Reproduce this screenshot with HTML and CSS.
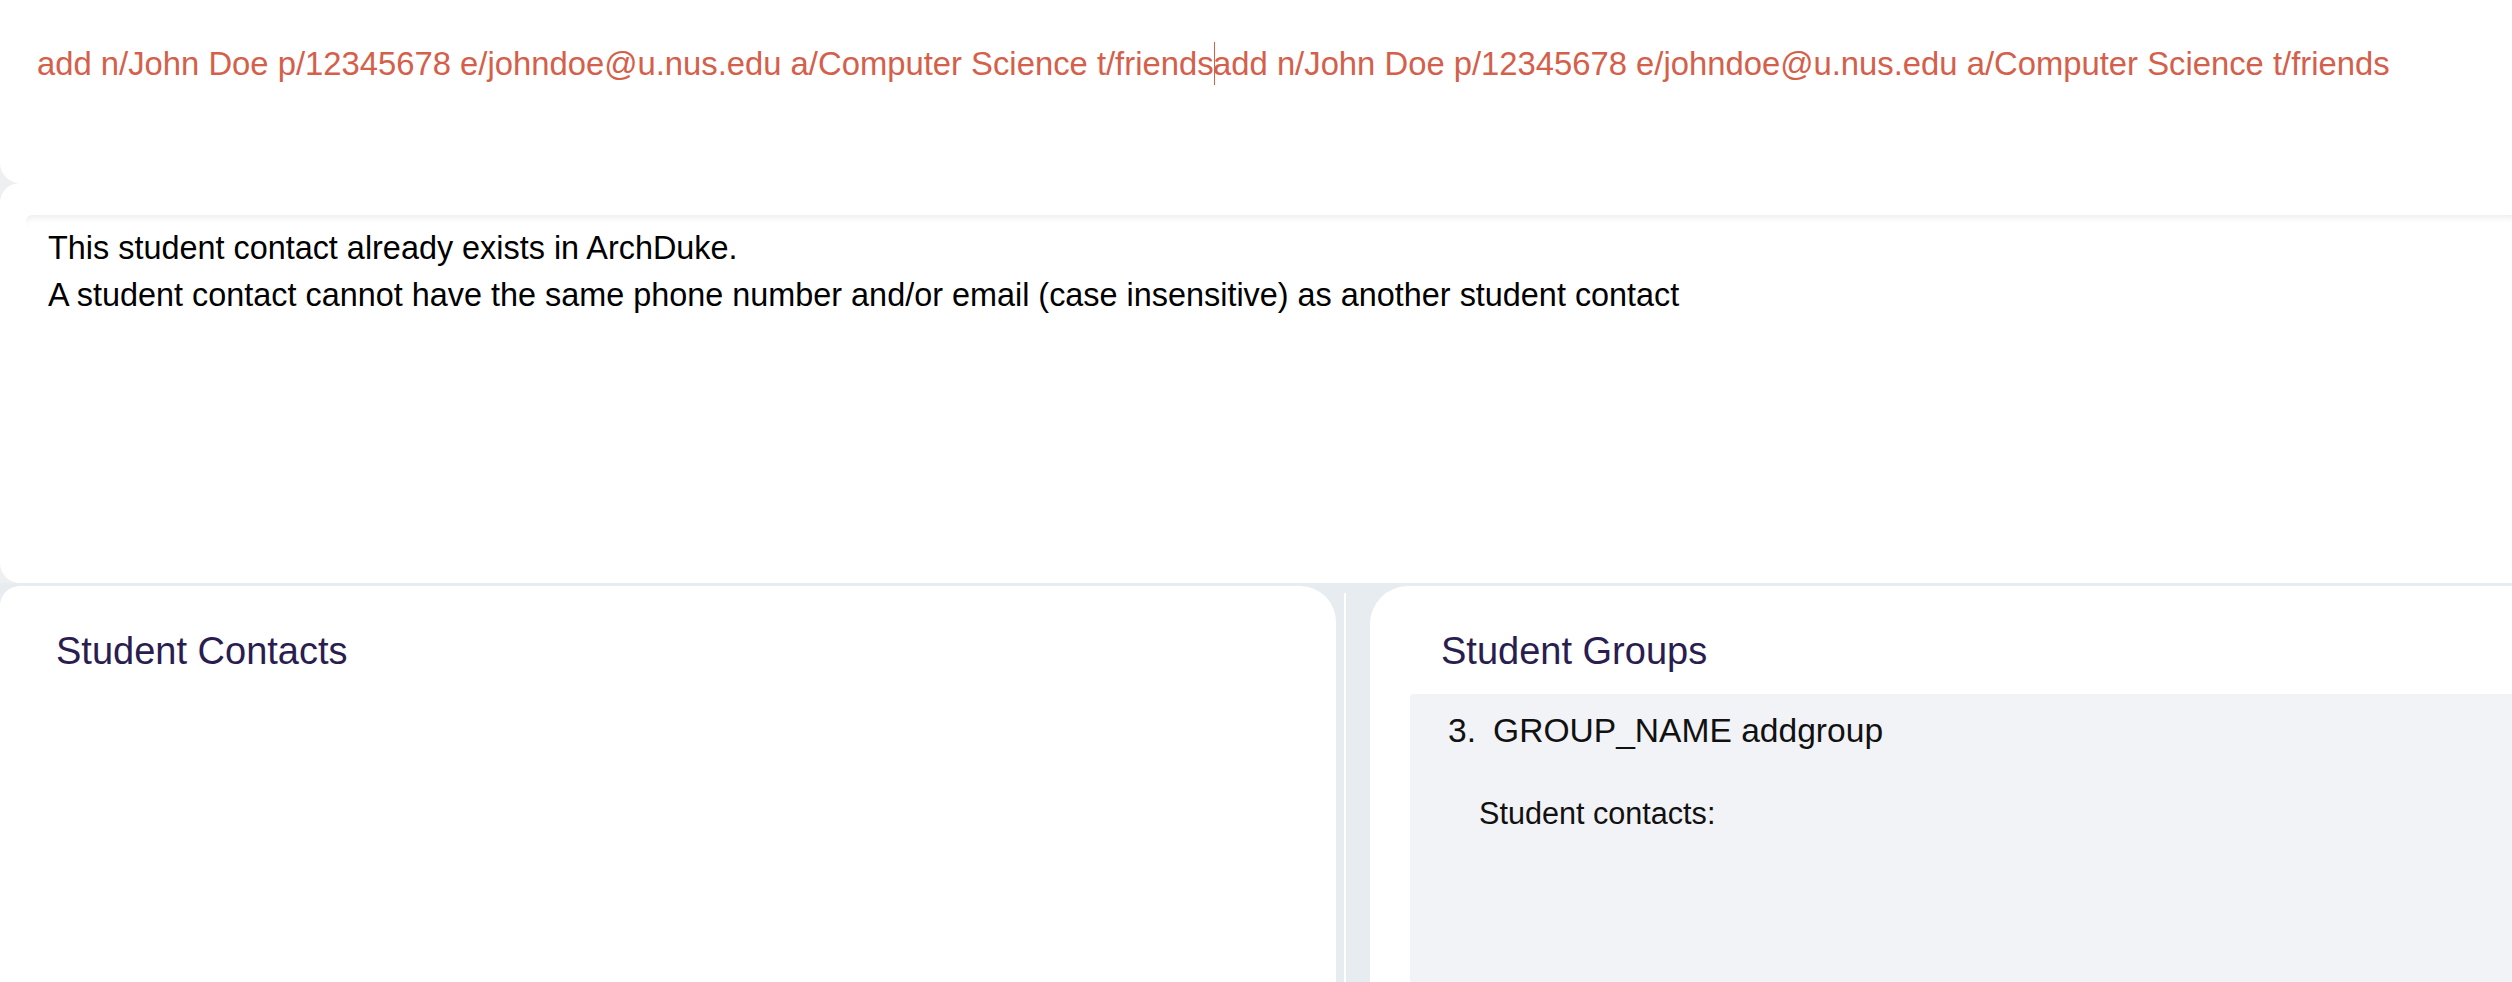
FILE: index.html
```html
<!DOCTYPE html>
<html lang="en">
<head>
<meta charset="utf-8">
<title>ArchDuke</title>
<link rel="stylesheet" href="styles.css">
</head>
<body>
<div class="app">
  <div class="top">
    <div class="command-box">
      <div class="command-text">add n/John Doe p/12345678 e/johndoe@u.nus.edu a/Computer Science t/friends<span class="caret"></span>add n/John Doe p/12345678 e/johndoe@u.nus.edu a/Computer Science t/friends</div>
    </div>
    <div class="result-box">
      <div class="result-area">
        <p class="result-line">This student contact already exists in ArchDuke.</p>
        <p class="result-line">A student contact cannot have the same phone number and/or email (case insensitive) as another student contact</p>
      </div>
    </div>
  </div>
  <div class="panels">
    <section class="panel panel-left">
      <h2 class="panel-title">Student Contacts</h2>
    </section>
    <div class="divider"><div class="divider-line"></div></div>
    <section class="panel panel-right">
      <h2 class="panel-title panel-title-right">Student Groups</h2>
      <div class="group-card">
        <div class="group-name"><span class="group-index">3.</span>GROUP_NAME addgroup</div>
        <div class="group-sub">Student contacts:</div>
      </div>
    </section>
  </div>
</div>
</body>
</html>
```

FILE: styles.css
```css
html, body {
  margin: 0;
  padding: 0;
}
body {
  background: #e7ecf0;
  font-family: "Liberation Sans", Arial, sans-serif;
  width: 2512px;
  height: 982px;
  overflow: hidden;
}
.app {
  display: flex;
  flex-direction: column;
  height: 982px;
}
.top {
  background: #eeeff1;
  display: flex;
  flex-direction: column;
}
.command-box {
  background: #ffffff;
  height: 183px;
  box-sizing: border-box;
  padding: 42px 0 0 37px;
  border-bottom-left-radius: 20px;
}
.command-text {
  color: #d4604b;
  font-size: 32.8px;
  white-space: nowrap;
  line-height: 38px;
}
.caret {
  display: inline-block;
  width: 0;
  height: 43px;
  border-left: 1.5px solid #d4604b;
  margin-right: -1.5px;
  vertical-align: -10px;
}
.result-box {
  background: #ffffff;
  height: 400px;
  box-sizing: border-box;
  padding: 32px 0 12px 26px;
  border-top-left-radius: 20px;
  border-bottom-left-radius: 20px;
}
.result-area {
  height: 100%;
  box-sizing: border-box;
  padding: 10px 0 0 22px;
  border-top-left-radius: 6px;
  box-shadow: inset 0 7px 6px -4px rgba(0, 0, 0, 0.07);
}
.result-line {
  margin: 0;
  font-size: 32.4px;
  line-height: 47px;
  color: #000;
  white-space: nowrap;
}
.panels {
  margin-top: 3px;
  flex: 1;
  display: flex;
  min-height: 0;
}
.panel {
  background: #ffffff;
  box-sizing: border-box;
  padding-top: 43px;
}
.panel-left {
  width: 1336px;
  flex: none;
  border-top-left-radius: 20px;
  border-top-right-radius: 36px;
  padding-left: 56px;
}
.divider {
  width: 34px;
  flex: none;
  padding: 7px 0 0 8px;
  box-sizing: border-box;
}
.divider-line {
  width: 2px;
  height: 100%;
  background: #ffffff;
}
.panel-right {
  flex: 1;
  border-top-left-radius: 38px;
  padding-left: 40px;
  display: flex;
  flex-direction: column;
}
.panel-title {
  margin: 0;
  font-size: 38px;
  font-weight: normal;
  color: #2a1d50;
  line-height: 44px;
}
.panel-title-right {
  padding-left: 31px;
}
.group-card {
  margin-top: 21px;
  flex: 1;
  background: #f1f3f7;
  border-top-left-radius: 4px;
  padding: 17px 0 0 38px;
}
.group-name {
  font-size: 33.6px;
  line-height: 39px;
  color: #111;
  white-space: nowrap;
}
.group-index {
  margin-right: 17px;
}
.group-sub {
  margin-top: 46px;
  padding-left: 31px;
  font-size: 30.6px;
  line-height: 35px;
  color: #111;
}
```
